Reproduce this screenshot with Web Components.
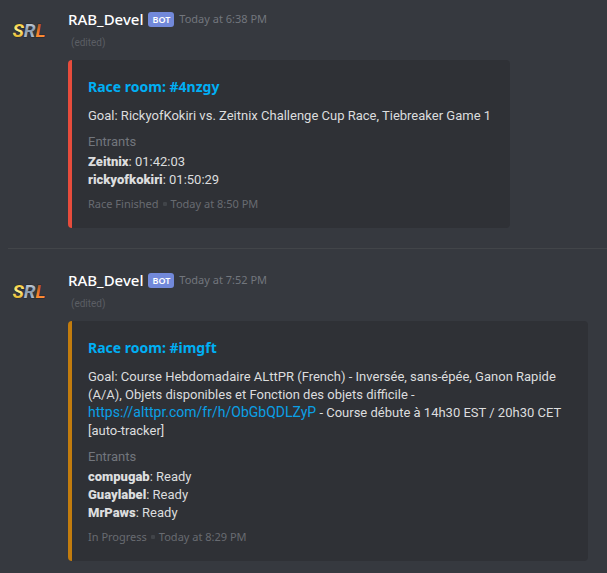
<!DOCTYPE html>
<html lang="en">
<head>
<meta charset="utf-8">
<title>Race rooms</title>
<style>
  body { margin: 0; background: #36393f; color: #dcddde; font: 13px/18px Roboto, "Noto Sans", sans-serif; }
</style>
</head>
<body>
<chat-log>
  <chat-message author="RAB_Devel" time="Today at 6:38 PM">
    <race-embed room="Race room: #4nzgy" status="Race Finished" time="Today at 8:50 PM" style="--accent: #e74c3c">
      Goal: RickyofKokiri vs. Zeitnix Challenge Cup Race, Tiebreaker Game 1
      <race-entrant slot="entrants" name="Zeitnix">01:42:03</race-entrant>
      <race-entrant slot="entrants" name="rickyofkokiri">01:50:29</race-entrant>
    </race-embed>
  </chat-message>
  <chat-message author="RAB_Devel" time="Today at 7:52 PM">
    <race-embed room="Race room: #imgft" status="In Progress" time="Today at 8:29 PM" style="--accent: #c27c0e">
      Goal: Course Hebdomadaire ALttPR (French) - Inversée, sans-épée, Ganon Rapide (A/A), Objets disponibles et Fonction des objets difficile - <a href="https://alttpr.com/fr/h/ObGbQDLZyP">https://alttpr.com/fr/h/ObGbQDLZyP</a> - Course débute à 14h30 EST / 20h30 CET [auto-tracker]
      <race-entrant slot="entrants" name="compugab">Ready</race-entrant>
      <race-entrant slot="entrants" name="Guaylabel">Ready</race-entrant>
      <race-entrant slot="entrants" name="MrPaws">Ready</race-entrant>
    </race-embed>
  </chat-message>
</chat-log>

<script>
const define = (name, html) => customElements.define(name, class extends HTMLElement {
  connectedCallback() {
    if (this.shadowRoot) return;
    const root = this.attachShadow({ mode: 'open' });
    root.innerHTML = html;
    root.querySelectorAll('[data-attr]').forEach(n => { n.textContent = this.getAttribute(n.dataset.attr); });
  }
});

define('chat-log', `
  <style>
    :host { display: block; padding-left: 8px; }
    ::slotted(chat-message:not(:first-child)) { border-top: 1px solid #424549; padding-top: 22px; }
  </style>
  <slot></slot>`);

define('srl-logo', `
  <style>
    :host { display: block; }
    svg { display: block; width: 40px; height: 40px; }
    text { font: italic 700 19px Roboto, sans-serif; paint-order: stroke; stroke: #25272c; stroke-width: 1px; }
  </style>
  <svg viewBox="0 0 40 40" role="img" aria-label="SRL">
    <defs>
      <linearGradient id="s" x1="0" y1="13" x2="0" y2="27" gradientUnits="userSpaceOnUse"><stop offset="0" stop-color="#f3c62f"/><stop offset=".5" stop-color="#fff08a"/><stop offset="1" stop-color="#e5b52b"/></linearGradient>
      <linearGradient id="r" x1="0" y1="13" x2="0" y2="27" gradientUnits="userSpaceOnUse"><stop offset="0" stop-color="#c6d2de"/><stop offset=".5" stop-color="#8b9bad"/><stop offset="1" stop-color="#adbccb"/></linearGradient>
      <linearGradient id="l" x1="0" y1="13" x2="0" y2="27" gradientUnits="userSpaceOnUse"><stop offset="0" stop-color="#a8532c"/><stop offset=".6" stop-color="#e87527"/><stop offset="1" stop-color="#ff8f35"/></linearGradient>
    </defs>
    <text x="21" y="27" text-anchor="middle"><tspan fill="url(#s)">S</tspan><tspan fill="url(#r)">R</tspan><tspan fill="url(#l)">L</tspan></text>
  </svg>`);

define('chat-message', `
  <style>
    :host { display: flex; gap: 20px; padding: 10px 0 20px; }
    srl-logo { flex: none; }
    .body { flex: 1; min-width: 0; }
    header { display: flex; align-items: center; gap: 5px; height: 18px; }
    h2 { margin: 0; color: #fff; font: 500 15px/18px "Noto Sans", sans-serif; }
    .bot { padding: 0 4px; border-radius: 3px; background: #7289da; color: #fff; font: 600 9px/15px "Noto Sans", sans-serif; }
    time { color: #72767d; font: 11px/18px "Noto Sans", sans-serif; }
    .edited { margin: 4px 0 7px 3px; color: #5b5e64; font: 10px/21px Roboto, sans-serif; }
  </style>
  <srl-logo></srl-logo>
  <div class="body">
    <header><h2 data-attr="author"></h2><span class="bot">BOT</span><time data-attr="time"></time></header>
    <div class="edited">(edited)</div>
    <slot></slot>
  </div>`);

define('race-entrant', `
  <style>
    :host { display: block; }
    b { font-weight: 900; }
  </style>
  <b data-attr="name"></b>: <slot></slot>`);

define('race-embed', `
  <style>
    :host { display: block; box-sizing: border-box; width: fit-content; max-width: min(520px, 100%); padding: 17px 19px 15px 16px; border-left: 4px solid var(--accent); border-radius: 4px; background: #2f3136; }
    h3 { margin: 0 0 10px; font: 700 14px/20px "Noto Sans", sans-serif; }
    a, ::slotted(a) { color: #00aff4; text-decoration: none; }
    ::slotted(a) { color: #0aa0e6; font-size: 14px; line-height: 14px; }
    a:hover, ::slotted(a:hover) { text-decoration: underline; }
    p { margin: 0 0 8px; }
    h4 { margin: 0 0 2px; font-size: 13px; line-height: 18px; font-weight: 400; color: #72767d; }
    footer { display: flex; align-items: center; gap: 4px; margin-top: 6px; color: #686b71; font: 11px/18px "Noto Sans", sans-serif; }
    i { width: 4px; height: 4px; border-radius: 1px; background: #414449; }
  </style>
  <h3><a href="#" data-attr="room"></a></h3>
  <p><slot></slot></p>
  <h4>Entrants</h4>
  <slot name="entrants"></slot>
  <footer><span data-attr="status"></span><i></i><time data-attr="time"></time></footer>`);
</script>
</body>
</html>
